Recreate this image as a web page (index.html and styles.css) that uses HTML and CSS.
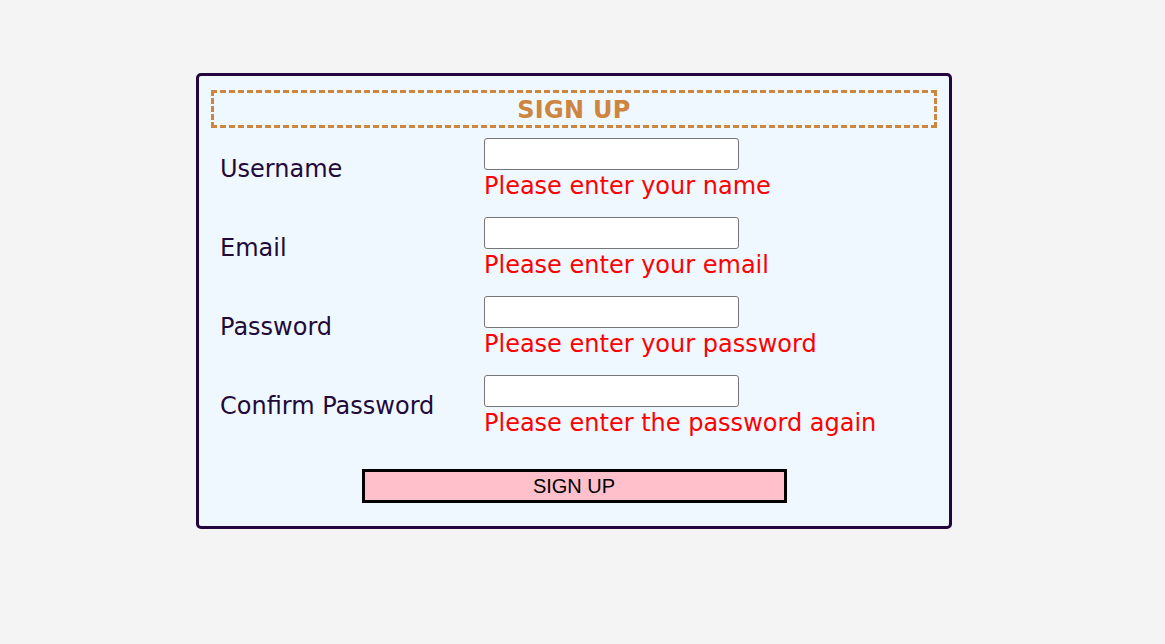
FILE: index.html
```html
<!DOCTYPE html>
<html>
<head>
<meta charset="utf-8">
<title>Sign Up</title>
<link rel="stylesheet" href="styles.css">
</head>
<body>
<form class="card">
  <div class="title">SIGN UP</div>
  <div class="rows">
    <div class="row">
      <label class="label">Username</label>
      <div class="field">
        <input class="input" type="text">
        <div class="error">Please enter your name</div>
      </div>
    </div>
    <div class="row">
      <label class="label">Email</label>
      <div class="field">
        <input class="input" type="text">
        <div class="error">Please enter your email</div>
      </div>
    </div>
    <div class="row">
      <label class="label">Password</label>
      <div class="field">
        <input class="input" type="password">
        <div class="error">Please enter your password</div>
      </div>
    </div>
    <div class="row">
      <label class="label">Confirm Password</label>
      <div class="field">
        <input class="input" type="password">
        <div class="error">Please enter the password again</div>
      </div>
    </div>
  </div>
  <div class="actions">
    <button class="btn" type="button">SIGN UP</button>
  </div>
</form>
</body>
</html>
```
FILE: styles.css
```css
html, body {
  margin: 0;
  padding: 0;
}
body {
  background: #f4f4f4;
  font-family: "DejaVu Sans", Verdana, sans-serif;
  width: 1165px;
  height: 644px;
  padding-top: 73px;
  padding-left: 196px;
  box-sizing: border-box;
}
.card {
  width: 756px;
  box-sizing: border-box;
  border: 3px solid #22063d;
  border-radius: 5px;
  background: #f0f8ff;
  padding: 14px 12px 23px;
  display: flex;
  flex-direction: column;
}
.title {
  border: 3px dashed #cd853f;
  color: #cd853f;
  font-weight: bold;
  font-size: 24px;
  line-height: 28px;
  text-align: center;
  padding: 3px 0 1px;
  letter-spacing: 0.3px;
}
.rows {
  display: flex;
  flex-direction: column;
  gap: 17px;
  margin-top: 10px;
}
.row {
  display: grid;
  grid-template-columns: 264px 1fr;
  align-items: center;
  padding-left: 9px;
}
.label {
  font-size: 24px;
  line-height: 28px;
  color: #1f0a3a;
}
.field {
  display: flex;
  flex-direction: column;
  align-items: flex-start;
}
.input {
  width: 255px;
  height: 32px;
  box-sizing: border-box;
  border: 1px solid #767676;
  border-radius: 3px;
  background: #fff;
  margin: 0;
  padding: 1px 2px;
}
.error {
  color: #ff0000;
  font-size: 24px;
  line-height: 28px;
  margin-top: 2px;
}
.actions {
  display: flex;
  justify-content: center;
  margin-top: 32px;
}
.btn {
  width: 425px;
  height: 34px;
  box-sizing: border-box;
  border: 3px solid #000;
  background: #ffc0cb;
  color: #000;
  font-family: "Liberation Sans", Arial, sans-serif;
  font-size: 20px;
  padding: 0;
  margin: 0;
  cursor: pointer;
}
```
